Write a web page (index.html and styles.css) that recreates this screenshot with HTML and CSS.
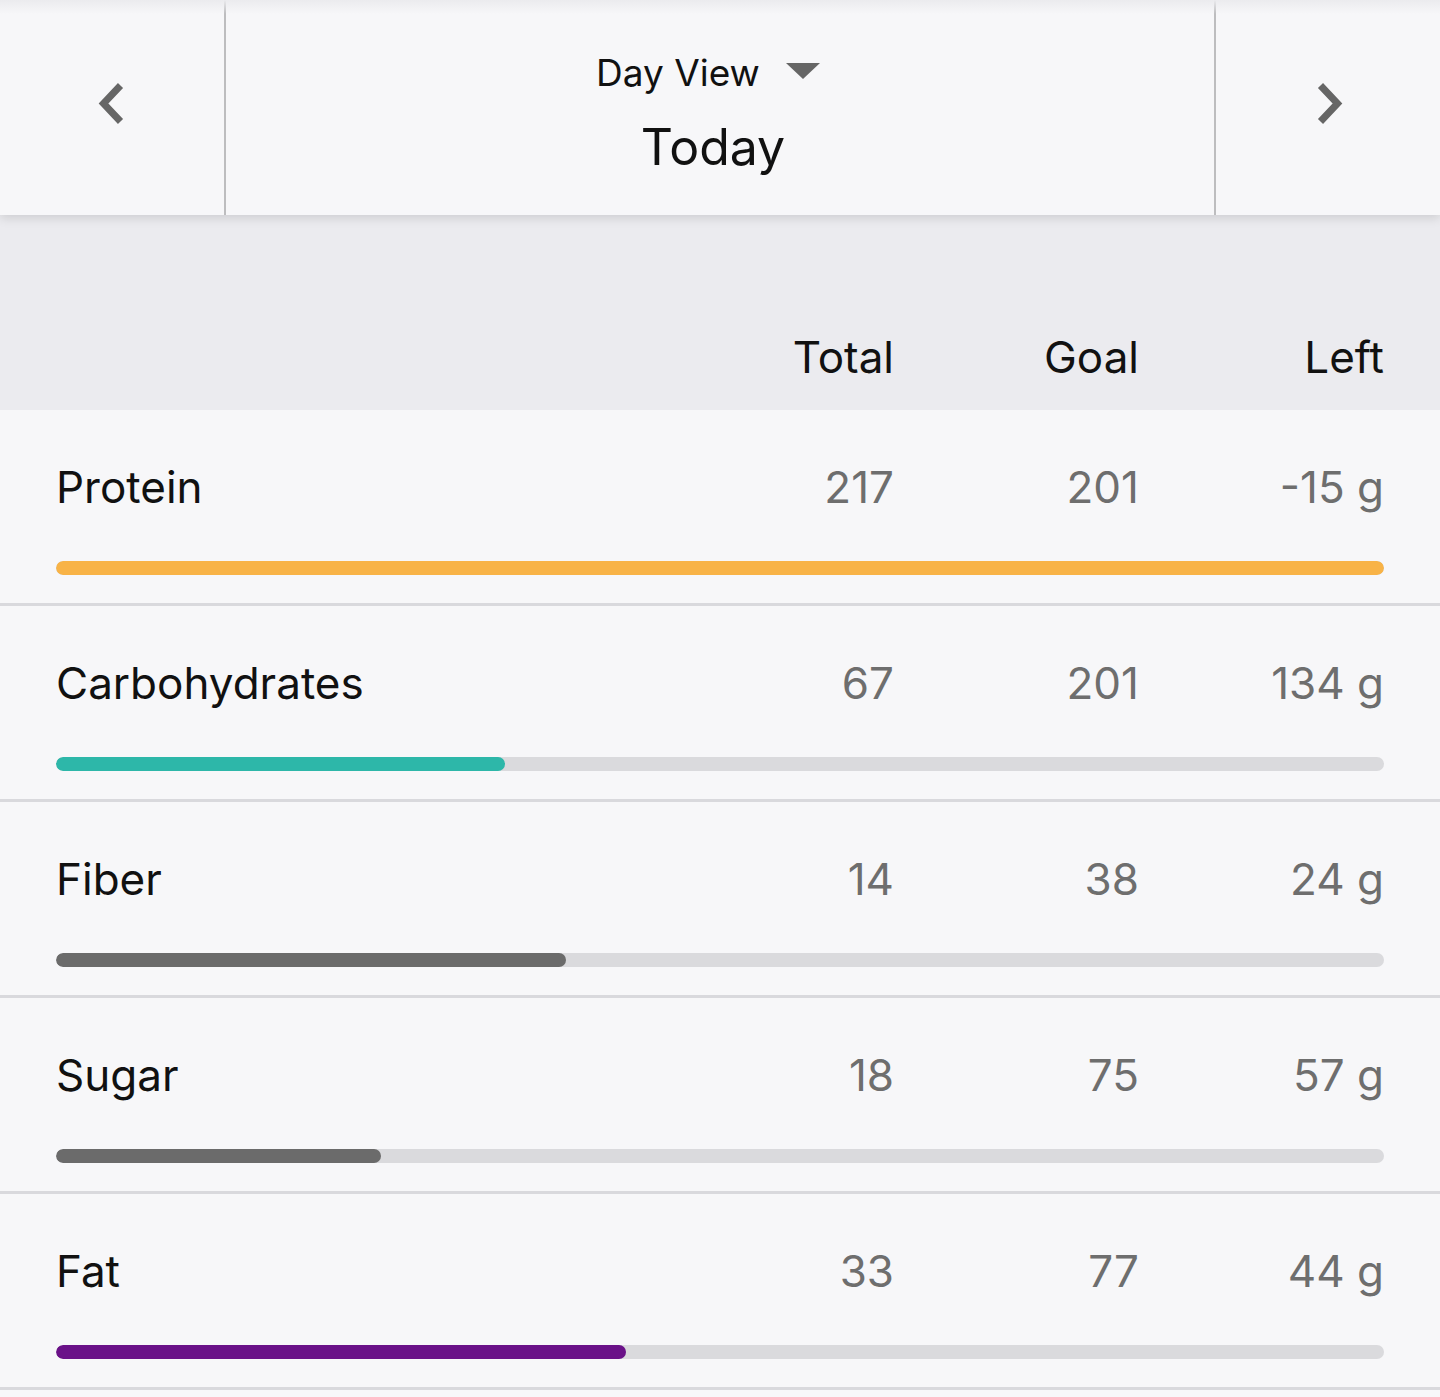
FILE: index.html
```html
<!DOCTYPE html>
<html>
<head>
<meta charset="utf-8">
<link rel="stylesheet" href="styles.css">
</head>
<body>
<div class="page">
  <header class="topbar">
    <div class="nav-cell nav-left">
      <svg class="chev" width="30" height="46" viewBox="0 0 30 46"><path d="M25.5 4.5 L8.5 22.5 L25.5 40.5" fill="none" stroke="#666" stroke-width="7" stroke-linejoin="miter"/></svg>
    </div>
    <div class="title-cell">
      <div class="view-select">
        <span class="view-label">Day View</span>
        <span class="caret"></span>
      </div>
      <div class="day-title">Today</div>
    </div>
    <div class="nav-cell nav-right">
      <svg class="chev" width="30" height="46" viewBox="0 0 30 46"><path d="M5.5 4.5 L22.5 22.5 L5.5 40.5" fill="none" stroke="#666" stroke-width="7" stroke-linejoin="miter"/></svg>
    </div>
  </header>

  <section class="col-head">
    <div class="grid">
      <span></span>
      <span class="num head">Total</span>
      <span class="num head">Goal</span>
      <span class="num head">Left</span>
    </div>
  </section>

  <section class="rows">
    <div class="row">
      <div class="grid">
        <span class="label">Protein</span>
        <span class="num">217</span>
        <span class="num">201</span>
        <span class="num">-15 g</span>
      </div>
      <div class="track"><div class="fill orange" style="width:100%"></div></div>
    </div>
    <div class="row">
      <div class="grid">
        <span class="label">Carbohydrates</span>
        <span class="num">67</span>
        <span class="num">201</span>
        <span class="num">134 g</span>
      </div>
      <div class="track"><div class="fill teal" style="width:33.8%"></div></div>
    </div>
    <div class="row">
      <div class="grid">
        <span class="label">Fiber</span>
        <span class="num">14</span>
        <span class="num">38</span>
        <span class="num">24 g</span>
      </div>
      <div class="track"><div class="fill grey" style="width:38.4%"></div></div>
    </div>
    <div class="row">
      <div class="grid">
        <span class="label">Sugar</span>
        <span class="num">18</span>
        <span class="num">75</span>
        <span class="num">57 g</span>
      </div>
      <div class="track"><div class="fill grey" style="width:24.5%"></div></div>
    </div>
    <div class="row">
      <div class="grid">
        <span class="label">Fat</span>
        <span class="num">33</span>
        <span class="num">77</span>
        <span class="num">44 g</span>
      </div>
      <div class="track"><div class="fill purple" style="width:42.9%"></div></div>
    </div>
  </section>
</div>
</body>
</html>
```

FILE: styles.css
```css
* { box-sizing: border-box; }
html, body { margin: 0; padding: 0; }
body {
  background: #f7f7f9;
  font-family: Inter, "Noto Sans", sans-serif;
  color: #111;
}
.page { width: 1440px; }

.topbar {
  position: relative;
  display: flex;
  height: 215px;
  background: #f7f7f9;
  box-shadow: 0 3px 10px rgba(0,0,0,0.13);
  z-index: 2;
}
.topbar::before {
  content: "";
  position: absolute;
  left: 0; right: 0; top: 0;
  height: 14px;
  background: linear-gradient(#ebebee, rgba(247,247,249,0));
  pointer-events: none;
}
.nav-cell {
  width: 225px;
  display: flex;
  align-items: center;
  justify-content: center;
}
.nav-left { border-right: 2px solid #bdbdbf; width: 226px; padding-right: 5px; padding-bottom: 8px; }
.nav-right { border-left: 2px solid #bdbdbf; width: 226px; padding-left: 3px; padding-bottom: 8px; }
.title-cell {
  flex: 1;
  display: flex;
  flex-direction: column;
  align-items: center;
  padding-top: 50px;
}
.view-select {
  display: flex;
  align-items: center;
  gap: 26px;
  height: 46px;
  padding-right: 24px;
}
.view-label {
  font-size: 37px;
  line-height: 46px;
  color: #111;
}
.caret {
  width: 0; height: 0;
  border-left: 17px solid transparent;
  border-right: 17px solid transparent;
  border-top: 16px solid #666;
  margin-bottom: 4px;
}
.day-title {
  font-size: 50px;
  line-height: 60px;
  margin-top: 21px;
  padding-right: 14px;
  color: #111;
}

.col-head {
  background: #ebebef;
  height: 195px;
  padding: 0 56px;
  display: flex;
  align-items: flex-end;
  padding-bottom: 26px;
}
.col-head .grid { width: 100%; }

.grid {
  display: grid;
  grid-template-columns: 1fr 245px 245px 245px;
  align-items: baseline;
}
.num {
  text-align: right;
  font-size: 44px;
  line-height: 54px;
  color: #6e6e6e;
}
.num.head { color: #111; }
.label {
  font-size: 44px;
  line-height: 54px;
  color: #111;
}

.row {
  height: 196px;
  padding: 50px 56px 0;
  border-bottom: 3px solid #d9d9dd;
  background: #f7f7f9;
}
.track {
  margin-top: 47px;
  height: 14px;
  border-radius: 7px;
  background: #dadadd;
  overflow: hidden;
}
.fill { height: 100%; border-radius: 7px; }
.orange { background: #f8b347; }
.teal { background: #2db7a9; }
.grey { background: #6b6b6b; }
.purple { background: #6a1188; }
```
